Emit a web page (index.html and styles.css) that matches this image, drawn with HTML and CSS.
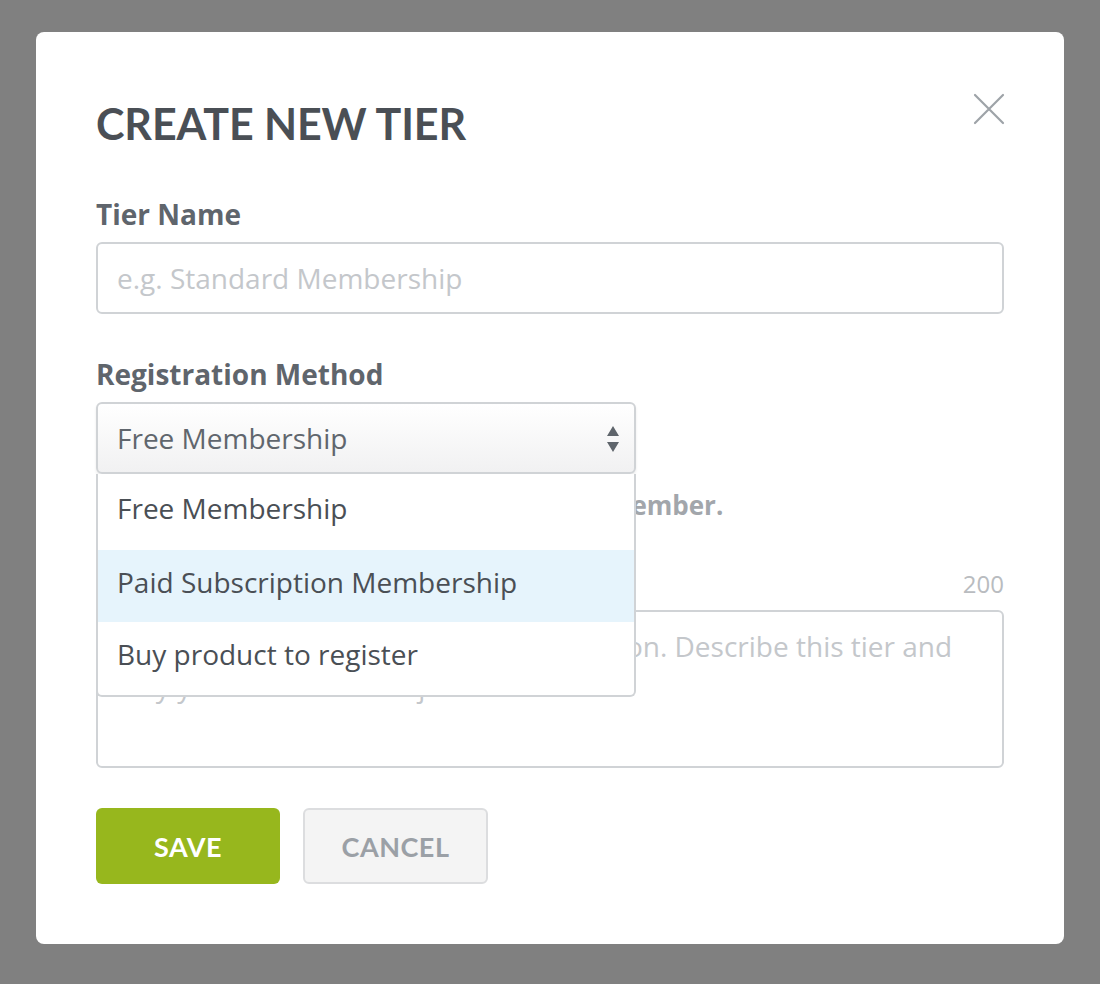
FILE: index.html
```html
<!DOCTYPE html>
<html>
<head>
<meta charset="utf-8">
<link rel="stylesheet" href="styles.css">
</head>
<body>
<div class="modal">
  <div class="modal-head">
    <h1 class="title">CREATE NEW TIER</h1>
    <button class="close" aria-label="Close">
      <svg width="32" height="32" viewBox="0 0 32 32"><path d="M2 2 L30 30 M30 2 L2 30" stroke="#9ea3a8" stroke-width="2.2" stroke-linecap="round" fill="none"/></svg>
    </button>
  </div>

  <div class="field">
    <label class="label">Tier Name</label>
    <input class="input" type="text" placeholder="e.g. Standard Membership">
  </div>

  <div class="field">
    <label class="label">Registration Method</label>
    <div class="select-wrap">
      <div class="select">
        <span>Free Membership</span>
        <svg class="arrows" width="14" height="30" viewBox="0 0 14 30"><path d="M7 2 L13 12 L1 12 Z M1 18 L13 18 L7 28 Z" fill="#5f656c"/></svg>
      </div>
      <ul class="menu">
        <li class="option">Free Membership</li>
        <li class="option active">Paid Subscription Membership</li>
        <li class="option">Buy product to register</li>
      </ul>
    </div>
    <p class="help">Users can register for free to become a member.</p>
  </div>

  <div class="field">
    <div class="label-row">
      <label class="label">Description</label>
      <span class="counter">200</span>
    </div>
    <textarea class="textarea" placeholder="Add a brief description of this registration. Describe this tier and&#10;why your users should join it."></textarea>
  </div>

  <div class="actions">
    <button class="btn btn-save">SAVE</button>
    <button class="btn btn-cancel">CANCEL</button>
  </div>
</div>
</body>
</html>
```

FILE: styles.css
```css
* { box-sizing: border-box; }
html, body { margin: 0; padding: 0; }
body {
  background: #808080;
  padding: 32px 36px 40px;
  font-family: "Open Sans", "Liberation Sans", sans-serif;
}
.modal {
  background: #fff;
  border-radius: 8px;
  padding: 62px 60px 60px;
}
.modal-head {
  display: flex;
  justify-content: space-between;
  align-items: flex-start;
}
.title {
  margin: 0;
  font-family: Lato, "Liberation Sans", sans-serif;
  font-weight: 700;
  font-size: 43px;
  line-height: 60px;
  color: #4a4f55;
  letter-spacing: -0.1px;
}
.close {
  border: 0;
  background: none;
  padding: 0;
  margin-top: -2px;
  margin-right: -2px;
  width: 34px;
  height: 34px;
  display: flex;
  align-items: center;
  justify-content: center;
}
.field { margin-top: 43px; }
.label {
  display: block;
  font-weight: 700;
  font-size: 28px;
  line-height: 34px;
  color: #5f656c;
  margin-bottom: 11px;
}
.input, .textarea {
  display: block;
  width: 100%;
  border: 2px solid #d0d3d6;
  border-radius: 6px;
  background: #fff;
  font-family: "Open Sans", "Liberation Sans", sans-serif;
  font-size: 28px;
  color: #4a4f55;
  padding: 0 19px;
  outline: none;
}
.input { height: 72px; }
.input::placeholder, .textarea::placeholder { color: #c4c7cb; opacity: 1; }
.select-wrap { position: relative; width: 540px; }
.select {
  height: 72px;
  border: 2px solid #d0d3d6;
  border-radius: 6px;
  background: linear-gradient(#ffffff, #f1f1f2);
  display: flex;
  align-items: center;
  justify-content: space-between;
  padding: 0 14px 0 19px;
  font-size: 28px;
  color: #60666d;
  box-shadow: 0 2px 3px rgba(0,0,0,0.08);
}
.arrows { margin-top: 2px; }
.menu {
  position: absolute;
  left: 0;
  top: 72px;
  width: 540px;
  margin: 0;
  padding: 0;
  list-style: none;
  background: #fff;
  border: 2px solid #d0d3d6;
  border-top: 0;
  border-radius: 0 0 6px 6px;
  z-index: 5;
}
.option {
  height: 72px;
  display: flex;
  align-items: center;
  padding: 0 19px 8px;
  font-size: 28px;
  color: #4a4f55;
}
.option:first-child { height: 76px; }
.option:last-child { height: 73px; padding-bottom: 10px; }
.option.active { background: #e6f4fc; }
.help {
  margin: 14px 0 0;
  font-weight: 700;
  font-size: 26px;
  line-height: 34px;
  color: #a2a6ab;
}
.label-row {
  display: flex;
  justify-content: space-between;
  align-items: baseline;
}
.counter {
  font-size: 24px;
  color: #b9bcc0;
}
.textarea {
  height: 158px;
  padding: 14px 19px;
  line-height: 40px;
  resize: none;
}
.actions {
  display: flex;
  gap: 23px;
  margin-top: 40px;
}
.btn {
  height: 76px;
  border-radius: 6px;
  font-family: Lato, "Liberation Sans", sans-serif;
  font-weight: 700;
  font-size: 27px;
  letter-spacing: 0.5px;
}
.btn-save {
  width: 184px;
  background: #97b71d;
  border: 0;
  color: #fff;
}
.btn-cancel {
  width: 185px;
  background: #f4f4f4;
  border: 2px solid #dcdddf;
  color: #9ba0a6;
}
```
